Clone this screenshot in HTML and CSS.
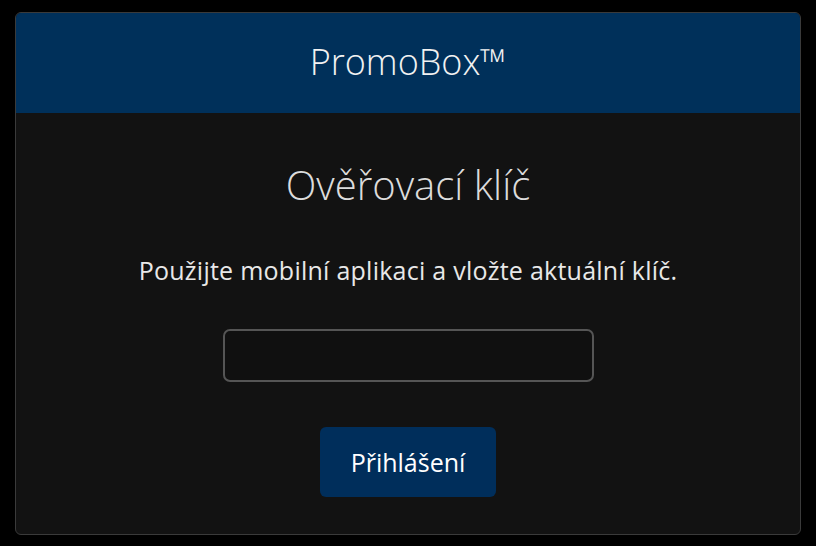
FILE: index.html
```html
<!DOCTYPE html>
<html>
<head>
    <title>PromoBox - Ověřovací klíč</title>
    <link rel="stylesheet" href="styles.css">
</head>
<body>
    <div class="card">
        <div class="card-header">PromoBox™</div>
        <div class="card-body">
            <h1>Ověřovací klíč</h1>
            <p>Použijte mobilní aplikaci a vložte aktuální klíč.</p>
            <input type="text" class="key-input">
            <button class="login-btn">Přihlášení</button>
        </div>
    </div>
</body>
</html>
```

FILE: styles.css
```css
body {
    margin: 0;
    padding: 12px 15px;
    background: #000;
    font-family: "Open Sans", "Noto Sans", sans-serif;
    color: #e8e8e8;
}
.card {
    border: 1px solid #3a3a3a;
    border-radius: 6px;
    overflow: hidden;
    background: #121212;
    height: 521px;
    display: flex;
    flex-direction: column;
}
.card-header {
    background: #00305a;
    color: #f2f2f2;
    height: 100px;
    box-sizing: border-box;
    padding-bottom: 3px;
    display: flex;
    align-items: center;
    justify-content: center;
    font-size: 36px;
    font-weight: 300;
}
.card-body {
    display: flex;
    flex-direction: column;
    align-items: center;
}
h1 {
    margin: 50px 0 0;
    font-size: 40px;
    font-weight: 300;
    line-height: 44px;
    color: #dcdcdc;
}
p {
    margin: 46px 0 0;
    font-size: 25px;
    line-height: 34px;
    letter-spacing: 0.25px;
}
.key-input {
    margin-top: 42px;
    width: 371px;
    height: 53px;
    box-sizing: border-box;
    background: #101010;
    border: 2px solid #555;
    border-radius: 7px;
    color: #eee;
    font-size: 20px;
    outline: none;
}
.login-btn {
    margin-top: 45px;
    width: 176px;
    height: 70px;
    background: #002e5b;
    color: #fff;
    border: none;
    border-radius: 6px;
    font-family: inherit;
    font-size: 25px;
    cursor: pointer;
}
```
